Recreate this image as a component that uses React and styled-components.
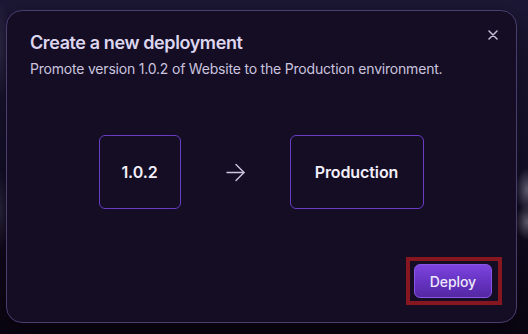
import React from 'react';
import styled, { createGlobalStyle } from 'styled-components';

const GlobalStyle = createGlobalStyle`
  html, body {
    margin: 0;
    padding: 0;
    height: 100%;
  }
  body {
    font-family: Inter, "Noto Sans", "Liberation Sans", sans-serif;
    background:
      radial-gradient(ellipse 12px 22px at 527px 190px, rgba(160, 155, 178, 0.6), transparent),
      radial-gradient(ellipse 12px 18px at 527px 222px, rgba(170, 165, 185, 0.55), transparent),
      radial-gradient(ellipse 10px 40px at 0px 210px, rgba(90, 85, 110, 0.35), transparent),
      radial-gradient(ellipse 10px 50px at 0px 50px, rgba(70, 62, 95, 0.5), transparent),
      linear-gradient(180deg, #1c1734 0%, #15102a 45%, #0a0512 100%);
    overflow: hidden;
  }
`;

const Stage = styled.div`
  width: 528px;
  height: 334px;
  box-sizing: border-box;
  padding: 10px 11px 11px 6px;
`;

const Dialog = styled.div`
  position: relative;
  height: 100%;
  box-sizing: border-box;
  display: flex;
  flex-direction: column;
  padding: 20px 24px 24px 23px;
  background: #140d24;
  border: 1px solid #4a3e6e;
  border-radius: 16px;
  box-shadow: 0 10px 30px rgba(0, 0, 0, 0.4);
`;

const Title = styled.h2`
  margin: 0;
  font-size: 18px;
  line-height: 24px;
  font-weight: 600;
  letter-spacing: -0.4px;
  color: #ddd6ef;
`;

const Subtitle = styled.p`
  margin: 4px 0 0;
  font-size: 14px;
  line-height: 20px;
  font-weight: 400;
  letter-spacing: -0.2px;
  color: #cbc4df;
`;

const CloseButton = styled.button`
  position: absolute;
  top: 13px;
  right: 12px;
  width: 22px;
  height: 22px;
  padding: 0;
  border: none;
  background: none;
  display: flex;
  align-items: center;
  justify-content: center;
  color: #c6bfda;
  cursor: pointer;
`;

const Flow = styled.div`
  margin-top: 56px;
  display: flex;
  align-items: center;
  justify-content: center;
  gap: 45px;
`;

const Stop = styled.div`
  width: ${p => p.$width}px;
  height: 74px;
  box-sizing: border-box;
  display: flex;
  align-items: center;
  justify-content: center;
  border: 1px solid #6a3cc4;
  border-radius: 6px;
  font-size: 16px;
  font-weight: 600;
  letter-spacing: -0.1px;
  color: #f2eefa;
`;

const Footer = styled.div`
  margin-top: auto;
  display: flex;
  justify-content: flex-end;
`;

const DeployButton = styled.button`
  position: relative;
  height: 34px;
  padding: 0 15px;
  border: 1px solid #8a55e6;
  border-radius: 6px;
  background: linear-gradient(180deg, #7d44df 0%, #6432bf 55%, #5428a3 100%);
  color: #eee8fb;
  font-family: inherit;
  font-size: 14px;
  font-weight: 500;
  letter-spacing: -0.1px;
  cursor: pointer;

  /* highlight frame drawn over the button */
  &::after {
    content: '';
    position: absolute;
    inset: -8px -11px -8px -9px;
    border: 4px solid #86161f;
    pointer-events: none;
  }
`;

const Arrow = () => (
  <svg width="19" height="19" viewBox="0 0 19 19" fill="none" stroke="#cdc6e0" strokeWidth="1.4" strokeLinecap="round" strokeLinejoin="round">
    <path d="M1 9.5h17" />
    <path d="M10 1.5l8 8-8 8" />
  </svg>
);

const CloseIcon = () => (
  <svg width="10" height="10" viewBox="0 0 10 10" fill="none" stroke="currentColor" strokeWidth="1.5" strokeLinecap="round">
    <path d="M1 1l8 8M9 1 1 9" />
  </svg>
);

export default function App() {
  return (
    <>
      <GlobalStyle />
      <Stage>
        <Dialog>
          <Title>Create a new deployment</Title>
          <Subtitle>Promote version 1.0.2 of Website to the Production environment.</Subtitle>
          <CloseButton aria-label="Close">
            <CloseIcon />
          </CloseButton>
          <Flow>
            <Stop $width={82}>1.0.2</Stop>
            <Arrow />
            <Stop $width={134}>Production</Stop>
          </Flow>
          <Footer>
            <DeployButton>Deploy</DeployButton>
          </Footer>
        </Dialog>
      </Stage>
    </>
  );
}
